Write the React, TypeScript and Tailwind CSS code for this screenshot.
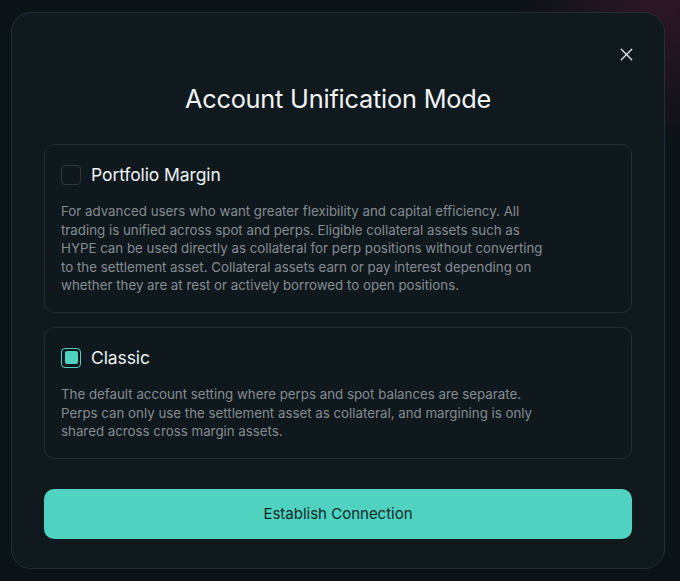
import React, { useState } from 'react';
import { X } from 'lucide-react';

type Mode = 'portfolio' | 'classic';

const modes: { id: Mode; title: string; text: string }[] = [
  {
    id: 'portfolio',
    title: 'Portfolio Margin',
    text: 'For advanced users who want greater flexibility and capital efficiency. All trading is unified across spot and perps. Eligible collateral assets such as HYPE can be used directly as collateral for perp positions without converting to the settlement asset. Collateral assets earn or pay interest depending on whether they are at rest or actively borrowed to open positions.',
  },
  {
    id: 'classic',
    title: 'Classic',
    text: 'The default account setting where perps and spot balances are separate. Perps can only use the settlement asset as collateral, and margining is only shared across cross margin assets.',
  },
];

const ModeCard = ({ title, text, checked, onSelect }: { title: string; text: string; checked: boolean; onSelect: () => void }) => (
  <div
    onClick={onSelect}
    className="rounded-[10px] border border-[#222d34] bg-[#0f181d] px-4 pt-5 pb-[17px] cursor-pointer"
  >
    <div className="flex items-center gap-[10px]">
      {/* checkbox */}
      <div
        className={`w-5 h-5 rounded-[4px] flex items-center justify-center ${
          checked ? 'border-[1.5px] border-[#50d2c1]' : 'border-[1.5px] border-[#2c363d]'
        }`}
      >
        {checked && <div className="w-[13px] h-[13px] rounded-[2px] bg-[#50d2c1]" />}
      </div>
      <span className="text-[17.5px] leading-5 text-[#eef2f3] tracking-[-0.1px]">{title}</span>
    </div>
    <p className="mt-[17px] max-w-[492px] text-[13.3px] leading-[18.6px] text-[#858c91]">{text}</p>
  </div>
);

const App = () => {
  const [mode, setMode] = useState<Mode>('classic');

  return (
    <div
      className="w-full h-[581px] overflow-hidden bg-[#0c1317] bg-[radial-gradient(circle_at_97%_0%,#2e1626_0%,transparent_16%)] pl-[11px] pt-3"
      style={{ fontFamily: 'Inter, "Noto Sans", sans-serif' }}
    >
      {/* Modal */}
      <div className="relative w-[654px] h-[557px] rounded-[20px] border border-[#232e36] bg-[#0f191e] px-8 pt-[33px]">
        <button className="absolute right-[27px] top-[31px] text-[#e6eaec]">
          <X size={21} strokeWidth={1.5} />
        </button>

        <h2 className="mt-[37px] text-center text-[25.3px] leading-8 text-[#f2f5f6] tracking-[-0.2px]">
          Account Unification Mode
        </h2>

        <div className="mt-[29px] flex flex-col gap-[14px]">
          {modes.map(m => (
            <ModeCard
              key={m.id}
              title={m.title}
              text={m.text}
              checked={mode === m.id}
              onSelect={() => setMode(m.id)}
            />
          ))}
        </div>

        <button className="mt-[30px] w-full h-[50px] rounded-[10px] bg-[#50d2c1] text-[15px] text-[#0b2b28]">
          Establish Connection
        </button>
      </div>
    </div>
  );
};

export default App;
